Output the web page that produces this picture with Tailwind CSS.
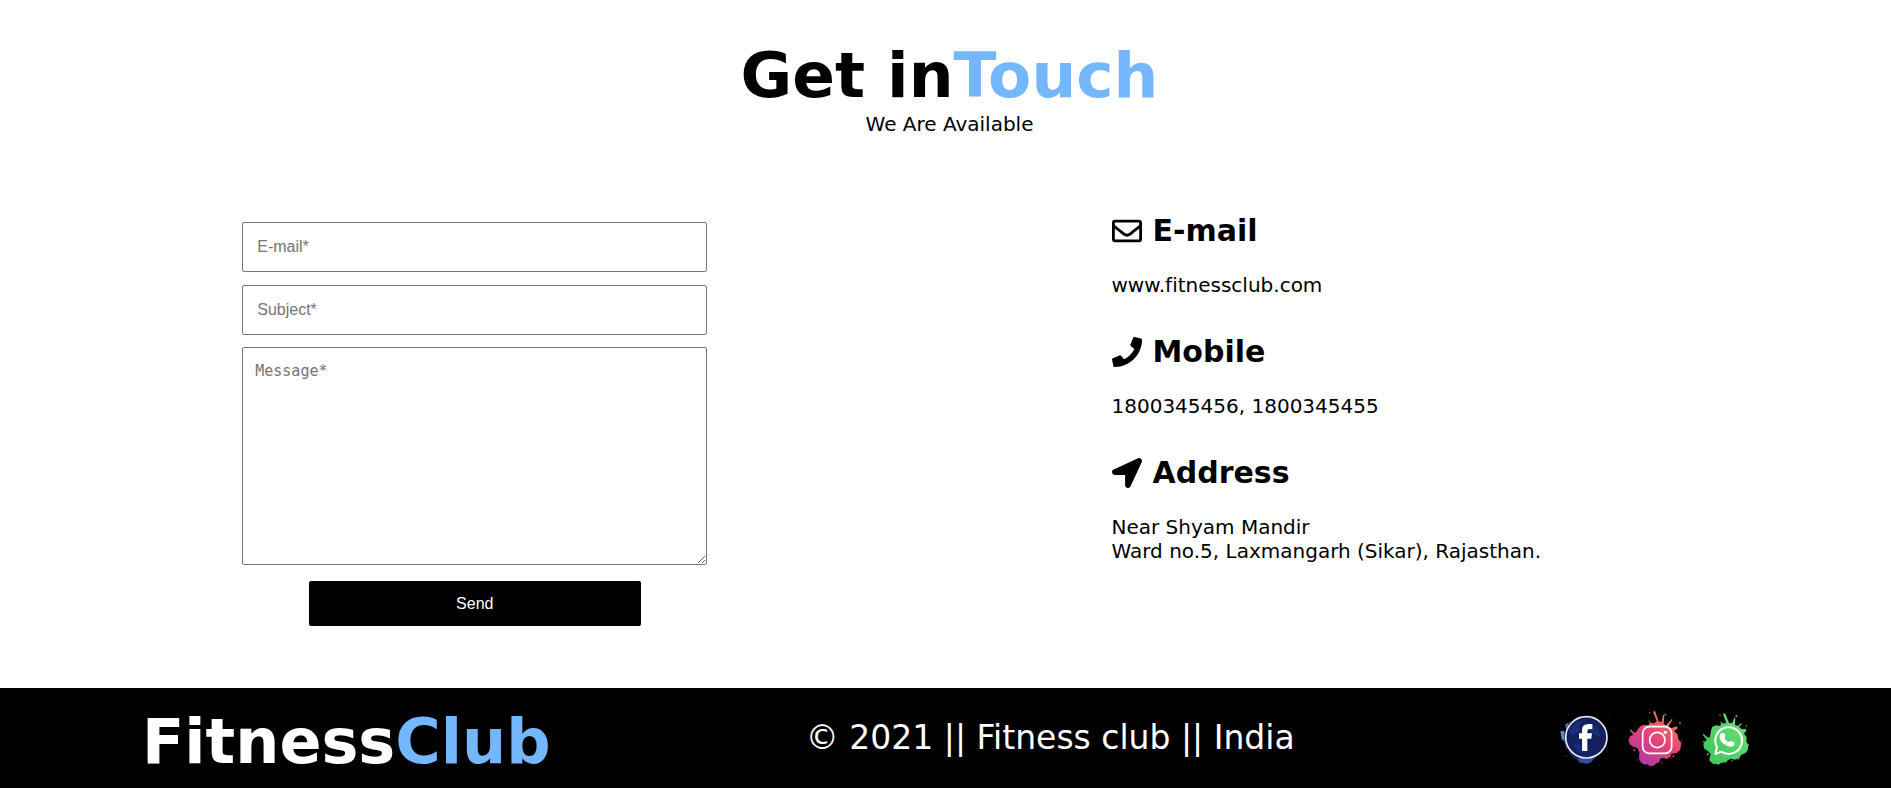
<!DOCTYPE html>
<html lang="en">
<head>
<meta charset="utf-8">
<meta name="viewport" content="width=device-width, initial-scale=1">
<title>Fitness Club - Contact</title>
<script src="https://cdn.jsdelivr.net/npm/@tailwindcss/browser@4"></script>
</head>
<body class="flex min-h-screen flex-col bg-white font-['Verdana','DejaVu_Sans',sans-serif] text-xl leading-6 text-black [font-variant-ligatures:none]">
<main class="flex-1 pb-[62px]">
  <header class="pt-10 pl-2 text-center">
    <h1 class="text-[63px] leading-[72px] font-bold">Get in<span class="text-[#74b7ff]">Touch</span></h1>
    <p>We Are Available</p>
  </header>
  <div class="grid grid-cols-2 pt-[73px]">
    <form class="ml-1 flex flex-col items-center pt-[13px] font-['Liberation_Sans',Arial,sans-serif] text-base">
      <input type="email" aria-label="E-mail" placeholder="E-mail*" class="mb-[13px] h-[50px] w-[465px] rounded-xs border border-[#767676] px-[14px] placeholder:text-[#757575]">
      <input type="text" aria-label="Subject" placeholder="Subject*" class="mb-3 h-[50px] w-[465px] rounded-xs border border-[#767676] px-[14px] placeholder:text-[#757575]">
      <textarea aria-label="Message" placeholder="Message*" class="mb-4 h-[218px] w-[465px] rounded-xs border border-[#767676] px-3 py-3 font-['DejaVu_Sans_Mono',monospace] text-[15px] placeholder:text-[#757575]"></textarea>
      <button type="submit" class="h-[45px] w-[332px] rounded-xs bg-black text-white">Send</button>
    </form>
    <address class="pt-1 pl-[166px] not-italic">
      <h2 class="flex items-center gap-[11px] text-[30px] leading-9 font-bold">
        <svg class="size-[30px]" viewBox="0 0 512 512" aria-hidden="true"><path d="M464 64H48C21.49 64 0 85.49 0 112v288c0 26.51 21.49 48 48 48h416c26.51 0 48-21.49 48-48V112c0-26.51-21.49-48-48-48zm0 48v40.805c-22.422 18.259-58.168 46.651-134.587 106.49-16.841 13.247-50.201 45.072-73.413 44.701-23.208.375-56.579-31.459-73.413-44.701C106.18 199.465 70.425 171.067 48 152.805V112h416zM48 400V214.398c22.914 18.251 55.409 43.862 104.938 82.646 21.857 17.205 60.134 55.186 103.062 54.955 42.717.231 80.509-37.199 103.053-54.947 49.528-38.783 82.032-64.401 104.947-82.653V400H48z"/></svg>
        E-mail</h2>
      <p class="pt-6 pb-[37px]">www.fitnessclub.com</p>
      <h2 class="flex items-center gap-[11px] text-[30px] leading-9 font-bold">
        <svg class="size-[30px]" viewBox="0 0 512 512" aria-hidden="true"><path d="M493.4 24.6l-104-24c-11.3-2.6-22.9 3.3-27.5 13.9l-48 112c-4.2 9.8-1.4 21.3 6.9 28l60.6 49.6c-36 76.7-98.9 140.5-177.2 177.2l-49.6-60.6c-6.8-8.3-18.2-11.1-28-6.9l-112 48C3.9 366.5-2 378.1.6 389.4l24 104C27.1 504.2 36.7 512 48 512c256.1 0 464-207.5 464-464 0-11.2-7.7-20.9-18.6-23.4z"/></svg>
        Mobile</h2>
      <p class="pt-6 pb-[37px]">1800345456, 1800345455</p>
      <h2 class="flex items-center gap-[11px] text-[30px] leading-9 font-bold">
        <svg class="size-[30px]" viewBox="0 0 512 512" aria-hidden="true"><path d="M444.52 3.52L28.74 195.42c-47.97 22.39-31.98 92.75 19.19 92.75h175.91v175.91c0 51.17 70.36 67.17 92.75 19.19l191.9-415.78c15.99-38.39-25.59-79.97-63.97-63.97z"/></svg>
        Address</h2>
      <p class="pt-6">Near Shyam Mandir<br>Ward no.5, Laxmangarh (Sikar), Rajasthan.</p>
    </address>
  </div>
</main>
<footer class="flex min-h-[100px] items-center justify-between bg-black pr-[131px] pl-[142px] text-white">
  <p class="pt-1.5 text-[62px] leading-[77px] font-bold">Fitness<span class="text-[#74b7ff]">Club</span></p>
  <p class="text-[33px] leading-10">© 2021 || Fitness club || India</p>
  <nav class="flex" aria-label="Social media">
    <a href="#" aria-label="Facebook">
      <svg class="size-[70px]" viewBox="0 9 210 210" fill="none">
        <g fill="#14215f">
          <path d="M47 72l9-6 10-3 12-8 14-6 12 2 18-5 8 1-4 7 17 7 12 11 9 14 5 15 1 14-3 15-8 18-10 14-14 12-5 9-12 1-4 8-17-3-9 2-6-10-12-6-11-14-7-13-8-2 3-10-5-7 3-12-2-9 7-5z"/>
          <circle cx="56" cy="42" r="2"/><circle cx="177" cy="54" r="2"/><circle cx="174" cy="155" r="2"/><circle cx="148" cy="195" r="2"/><circle cx="64" cy="190" r="2"/><circle cx="35" cy="151" r="2"/><circle cx="182" cy="86" r="2"/><circle cx="48" cy="168" r="3"/>
        </g>
        <path d="M31 94l12-2 1 32-9-6zM46 74l10-5-8 18z" fill="#5f86c4"/>
        <path d="M83 178l10-5 22 3 16-4-6 14-14 5-22-5z" fill="#3150a2"/>
        <path d="M56 88l20-20 26-8-18 18 6 16-24 12zM118 68l26 18 8 26-18-8-20-16zM70 130l20 2 10 30-20-8z" fill="#2440a0" opacity=".4"/>
        <circle cx="109" cy="112" r="62" stroke="#e6e9f3" stroke-width="5"/>
        <path d="M96 153v-37H87v-16h9V90q0-18 20-18h11v15h-8q-7 0-7 7v6h14l-2 16h-12v37z" fill="#fff"/>
      </svg>
    </a>
    <a href="#" aria-label="Instagram">
      <svg class="size-[70px]" viewBox="0 9 210 210" fill="none">
        <defs><linearGradient id="ig" x1="0.2" y1="1" x2="0.8" y2="0"><stop stop-color="#a936a8"/><stop offset=".5" stop-color="#e64378"/><stop offset="1" stop-color="#f3805d"/></linearGradient></defs>
        <g fill="url(#ig)">
          <path d="M62 78l10-4 12 2 5-6-5-13 9 12 10 1 7-7-11-28 6-2 11 31 9 2 4-22 4 2-2 25 7 5 18-20 1 3-12 21 10 4 16-5 2 6-11 8 11 10 2 14 8 12-1 16-10 13-18 4-3 9-11 6-12-4-8 5-1 7-12 6-6 6-12 1-9-6-6 2-12-7-5-12 1-18-6-13-13-4-10-8-4-12 6-12 9-4-10-12 1-5 12 11 7-3 2-6z"/>
          <circle cx="89" cy="39" r="2"/><circle cx="136" cy="44" r="3"/><circle cx="180" cy="70" r="3"/><circle cx="178" cy="152" r="2"/><circle cx="160" cy="169" r="3"/><circle cx="125" cy="188" r="2"/><circle cx="54" cy="180" r="2"/><circle cx="43" cy="151" r="3"/><circle cx="74" cy="188" r="2"/><circle cx="184" cy="125" r="2"/>
        </g>
        <rect x="68" y="80" width="87" height="80" rx="20" stroke="#fff" stroke-width="5"/>
        <circle cx="112" cy="120" r="23" stroke="#fff" stroke-width="5"/>
        <circle cx="136" cy="97" r="5" fill="#fff"/>
      </svg>
    </a>
    <a href="#" aria-label="WhatsApp">
      <svg class="size-[70px]" viewBox="0 9 210 210" fill="none">
        <defs><linearGradient id="wa" x1="0" y1="1" x2="1" y2="0"><stop stop-color="#3dc35b"/><stop offset="1" stop-color="#6fe277"/></linearGradient></defs>
        <g fill="url(#wa)">
          <path d="M66 81l12-5 12 2 4-6-5-9 9 7 11 0-10-28 6-2 13 30 9-2 6-15 3 2-1 20 8 3 11-9 1 4-8 8 9 7 11-1 2 7-8 6 9 12-1 12 6 12-2 15-7 8-13 6-5 9-13 5-12-3-10 5-3 6-16 1-9 6-9-3-6 2-8-8-4-8 4-14-8-10-10-5-4-12 3-11 8-5-12-14 1-5 14 12 6-2 1-8z"/>
          <circle cx="90" cy="45" r="2"/><circle cx="139" cy="49" r="3"/><circle cx="169" cy="78" r="2"/><circle cx="176" cy="135" r="2"/><circle cx="166" cy="156" r="3"/><circle cx="145" cy="177" r="2"/><circle cx="53" cy="163" r="3"/><circle cx="40" cy="126" r="2"/><circle cx="126" cy="182" r="2"/><circle cx="60" cy="181" r="2"/>
        </g>
        <path d="M76 162l5-21a40 40 0 1 1 13 14z" stroke="#fff" stroke-width="6" stroke-linejoin="round"/>
        <path d="M94 100c5-4 9-2 12 5 1 4-2 6-2 9 2 6 7 10 13 12 3 0 4-3 7-3 6 1 10 5 10 9-2 8-10 9-18 7-15-4-26-15-27-27-1-6 1-9 5-12z" fill="#fff"/>
      </svg>
    </a>
  </nav>
</footer>
</body>
</html>
